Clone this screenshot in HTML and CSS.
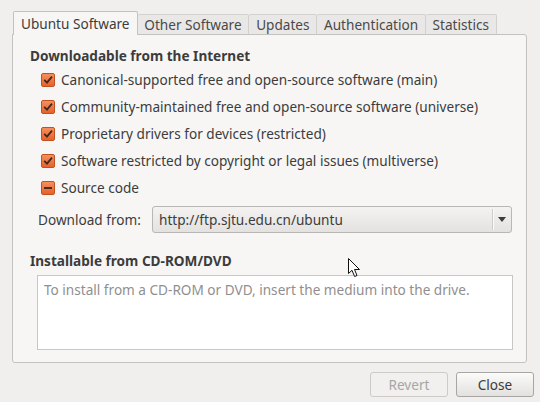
FILE: index.html
```html
<!DOCTYPE html>
<html>
<head>
<meta charset="utf-8">
<link rel="stylesheet" href="styles.css">
</head>
<body>
<div class="dialog">
  <div class="tabs">
    <div class="tab active">Ubuntu Software</div>
    <div class="tab">Other Software</div>
    <div class="tab">Updates</div>
    <div class="tab">Authentication</div>
    <div class="tab">Statistics</div>
  </div>
  <div class="panel">
    <div class="heading">Downloadable from the Internet</div>
    <div class="checks">
      <div class="check"><span class="box checked"><svg viewBox="0 0 14 14" width="14" height="14"><path d="M3.2 6.8 L6 9.6 L11 3.6" fill="none" stroke="#3b2a22" stroke-width="1.8"/></svg></span>Canonical-supported free and open-source software (main)</div>
      <div class="check"><span class="box checked"><svg viewBox="0 0 14 14" width="14" height="14"><path d="M3.2 6.8 L6 9.6 L11 3.6" fill="none" stroke="#3b2a22" stroke-width="1.8"/></svg></span>Community-maintained free and open-source software (universe)</div>
      <div class="check"><span class="box checked"><svg viewBox="0 0 14 14" width="14" height="14"><path d="M3.2 6.8 L6 9.6 L11 3.6" fill="none" stroke="#3b2a22" stroke-width="1.8"/></svg></span>Proprietary drivers for devices (restricted)</div>
      <div class="check"><span class="box checked"><svg viewBox="0 0 14 14" width="14" height="14"><path d="M3.2 6.8 L6 9.6 L11 3.6" fill="none" stroke="#3b2a22" stroke-width="1.8"/></svg></span>Software restricted by copyright or legal issues (multiverse)</div>
      <div class="check"><span class="box mixed"><span class="dash"></span></span>Source code</div>
    </div>
    <div class="download">
      <span class="label">Download from:</span>
      <div class="combo">
        <span class="combo-text">http://ftp.sjtu.edu.cn/ubuntu</span>
        <span class="combo-sep"></span>
        <span class="combo-arrow"><svg viewBox="0 0 8 5" width="8" height="5"><path d="M0 0 H8 L4 5 Z" fill="#3c3c3c"/></svg></span>
      </div>
    </div>
    <div class="heading heading2">Installable from CD-ROM/DVD</div>
    <div class="cdbox">To install from a CD-ROM or DVD, insert the medium into the drive.</div>
  </div>
  <div class="buttons">
    <div class="btn disabled">Revert</div>
    <div class="btn">Close</div>
  </div>
</div>
<svg class="cursor" viewBox="0 0 13 20" width="13" height="20"><path d="M0.5 0.5 L0.5 15.5 L4 12.3 L6.6 18.5 L9 17.5 L6.5 11.5 L11.5 11.5 Z" fill="#ffffff" stroke="#111" stroke-width="1"/></svg>
</body>
</html>
```
FILE: styles.css
```css
html, body {
  margin: 0;
  padding: 0;
}
body {
  width: 540px;
  height: 402px;
  background: #f0efed;
  font-family: "Noto Sans", "DejaVu Sans", sans-serif;
  font-size: 13.6px;
  color: #3c3c3c;
  position: relative;
  overflow: hidden;
}
.dialog {
  padding: 12px 13px 0 12px;
}
.tabs {
  display: flex;
  height: 22px;
  padding-left: 1px;
  align-items: flex-end;
}
.tab {
  height: 19px;
  line-height: 19px;
  padding: 0 6.75px;
  border: 1px solid #d3d1cd;
  border-bottom: none;
  border-left: none;
  background: #e9e8e6;
  color: #4a4a4a;
  border-radius: 2px 2px 0 0;
}
.tab.active {
  height: 23px;
  line-height: 23px;
  background: #f7f6f5;
  border: 1px solid #c4c2be;
  border-bottom: none;
  position: relative;
  top: 1px;
  z-index: 1;
  padding: 0 7px;
  color: #3c3c3c;
}
.panel {
  border: 1px solid #c4c2be;
  border-radius: 0 3px 3px 3px;
  background: #f7f6f5;
  padding: 0 13px 0 17px;
  box-sizing: border-box;
  height: 329px;
}
.heading {
  font-weight: bold;
  padding-top: 11px;
  height: 20px;
  line-height: 20px;
}
.checks {
  padding-left: 11px;
  padding-top: 0;
}
.check {
  display: flex;
  align-items: center;
  height: 27px;
}
.box {
  width: 12px;
  height: 12px;
  border: 1px solid #c0521f;
  border-radius: 2px;
  background: linear-gradient(#f4905f, #e8612a);
  margin-right: 6px;
  position: relative;
  flex: none;
}
.box svg {
  position: absolute;
  left: -1px;
  top: -1px;
}
.dash {
  position: absolute;
  left: 2px;
  top: 5px;
  width: 8px;
  height: 2px;
  background: #4a2e22;
}
.download {
  display: flex;
  align-items: center;
  margin-top: 5px;
  padding-left: 8px;
}
.label {
  width: 114px;
}
.combo {
  flex: 1;
  height: 27px;
  box-sizing: border-box;
  border: 1px solid #b9b7b3;
  border-radius: 3px;
  background: linear-gradient(#f4f3f2, #e3e2e0);
  display: flex;
  align-items: center;
  margin-right: 1px;
}
.combo-text {
  flex: 1;
  padding-left: 6px;
  color: #3c3c3c;
}
.combo-sep {
  width: 1px;
  height: 21px;
  background: #cfcdc9;
  box-shadow: 1px 0 0 #fafafa;
}
.combo-arrow {
  width: 18px;
  display: flex;
  justify-content: center;
}
.heading2 {
  padding-top: 18px;
}
.cdbox {
  margin: 4px 0 0 7px;
  height: 75px;
  box-sizing: border-box;
  border: 1px solid #c9c7c3;
  background: #ffffff;
  color: #8f8f8f;
  padding: 5px 6px;
  line-height: 18px;
}
.buttons {
  display: flex;
  justify-content: flex-end;
  gap: 8px;
  margin-top: 9px;
  margin-right: -7px;
}
.btn {
  width: 78px;
  height: 25px;
  box-sizing: border-box;
  border: 1px solid #a8a6a2;
  border-radius: 3px;
  background: linear-gradient(#fbfbfa, #e2e1df);
  text-align: center;
  line-height: 23px;
  color: #3c3c3c;
}
.btn.disabled {
  color: #a6a6a6;
  border-color: #cdcbc7;
  background: #f1f0ee;
}
.cursor {
  position: absolute;
  left: 348px;
  top: 258px;
}
```
